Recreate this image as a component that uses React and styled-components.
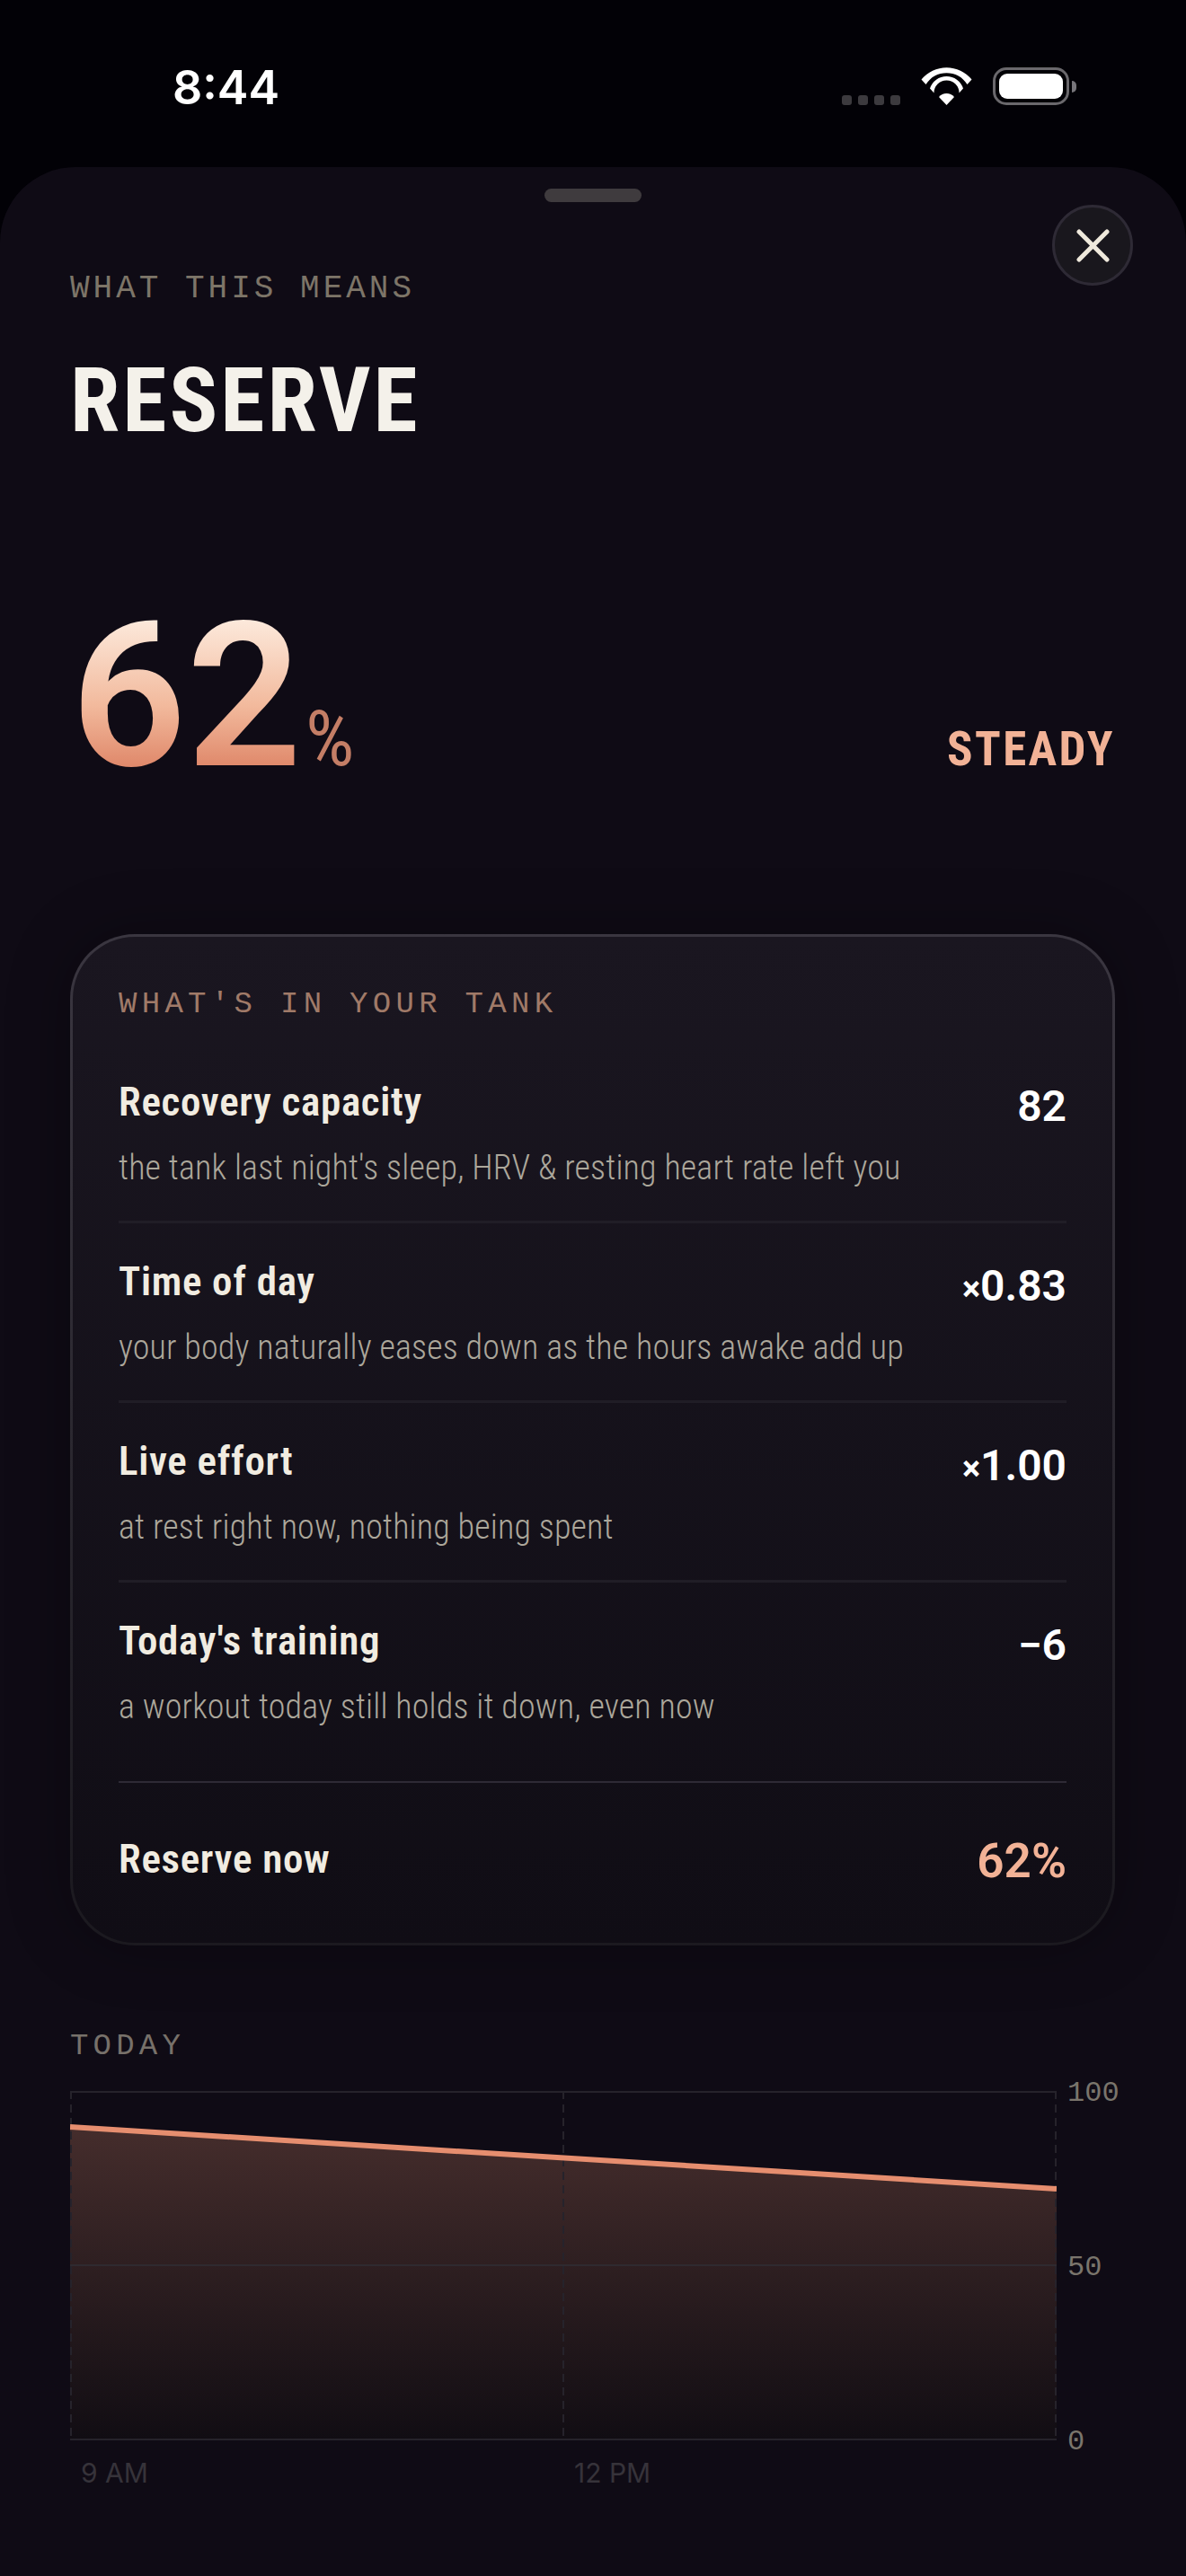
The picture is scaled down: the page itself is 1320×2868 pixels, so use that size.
import { createGlobalStyle, styled } from "styled-components";

const rows = [
    { title: "Recovery capacity", note: "the tank last night's sleep, HRV & resting heart rate left you", value: "82" },
    { title: "Time of day", note: "your body naturally eases down as the hours awake add up", prefix: "×", value: "0.83" },
    { title: "Live effort", note: "at rest right now, nothing being spent", prefix: "×", value: "1.00" },
    { title: "Today's training", note: "a workout today still holds it down, even now", value: "−6" },
];

export default function App() {
    return (
        <Page>
            <GlobalStyle />
            <StatusBar>
                <Clock>8:44</Clock>
                <StatusIcons>
                    <Signal>
                        <i /><i /><i /><i />
                    </Signal>
                    <svg width="57" height="42" viewBox="0 0 57 42" fill="#fff">
                        <path d="M0.5 13.5A36 36 0 0 1 56.5 13.5L51.5 19A27 27 0 0 0 5.5 19Z" />
                        <path d="M10 23.5A19.4 19.4 0 0 1 47 23.5L42.5 28.5A14 14 0 0 0 14.5 28.5Z" />
                        <path d="M20 33A11 11 0 0 1 37 33L28.5 42Z" />
                    </svg>
                    <Battery>
                        <BatteryFill />
                        <BatteryNub />
                    </Battery>
                </StatusIcons>
            </StatusBar>
            <Sheet>
                <Handle />
                <CloseButton>
                    <svg width="37" height="37" viewBox="0 0 37 37" fill="none" stroke="#efe9dc" strokeWidth="5" strokeLinecap="round">
                        <path d="M3 3L34 34M34 3L3 34" />
                    </svg>
                </CloseButton>
                <Eyebrow>WHAT THIS MEANS</Eyebrow>
                <Title>RESERVE</Title>
                <Hero>
                    <HeroValue>
                        <Number>62</Number>
                        <Percent>%</Percent>
                    </HeroValue>
                    <Status>STEADY</Status>
                </Hero>
                <Card>
                    <CardLabel>WHAT'S IN YOUR TANK</CardLabel>
                    {rows.map((row, i) => (
                        <Row key={row.title} $last={i === rows.length - 1}>
                            <RowTop>
                                <RowTitle>{row.title}</RowTitle>
                                <RowValue>
                                    {row.prefix && <Times>{row.prefix}</Times>}
                                    {row.value}
                                </RowValue>
                            </RowTop>
                            <RowNote>{row.note}</RowNote>
                        </Row>
                    ))}
                    <TotalRow>
                        <RowTitle>Reserve now</RowTitle>
                        <TotalValue>62%</TotalValue>
                    </TotalRow>
                </Card>
                <ChartLabel>TODAY</ChartLabel>
                <ChartRow>
                    <svg width="1098" height="390" viewBox="0 0 1098 390">
                        <defs>
                            <linearGradient id="area" x1="0" y1="40" x2="0" y2="388" gradientUnits="userSpaceOnUse">
                                <stop offset="0" stopColor="#452d2c" />
                                <stop offset="1" stopColor="#110d13" />
                            </linearGradient>
                        </defs>
                        <polygon points="0,40 1098,109 1098,388 0,388" fill="url(#area)" />
                        <g stroke="#26232b" strokeWidth="2" fill="none">
                            <path d="M0 1H1098M0 388H1098" />
                            <path d="M0 194H1098" stroke="#2f2a30" />
                            <path d="M1 0V388M549 0V388M1097 0V388" strokeDasharray="9 6" />
                        </g>
                        <line x1="0" y1="40" x2="1098" y2="109" stroke="#e68e6f" strokeWidth="6" />
                    </svg>
                    <YAxis>
                        <span>100</span>
                        <span>50</span>
                        <span>0</span>
                    </YAxis>
                </ChartRow>
                <XAxis>
                    <span>9 AM</span>
                    <span>12 PM</span>
                </XAxis>
            </Sheet>
        </Page>
    );
}

const GlobalStyle = createGlobalStyle`
    html, body {
        margin: 0;
        background: #020106;
    }
    * {
        box-sizing: border-box;
    }
`;

const mono = `"Liberation Mono", monospace`;

const Page = styled.div`
    width: 1320px;
    height: 2868px;
    overflow: hidden;
    background: #020106;
`;

const StatusBar = styled.div`
    height: 186px;
    padding: 73px 130px 0 192px;
    display: flex;
    justify-content: space-between;
    align-items: flex-start;
`;

const Clock = styled.div`
    font-family: Inter, sans-serif;
    font-size: 52px;
    font-weight: 600;
    line-height: 50px;
    color: #fff;
`;

const StatusIcons = styled.div`
    display: flex;
    align-items: flex-end;
    padding-top: 2px;
`;

const Signal = styled.div`
    display: flex;
    gap: 7px;
    margin-right: 23px;
    i {
        width: 11px;
        height: 11px;
        border-radius: 3px;
        background: #3c3a3e;
    }
`;

const Battery = styled.div`
    position: relative;
    width: 85px;
    height: 42px;
    margin-left: 23px;
    padding: 4px;
    border: 3px solid #6a686c;
    border-radius: 15px;
`;

const BatteryFill = styled.div`
    width: 100%;
    height: 100%;
    border-radius: 9px;
    background: #fff;
`;

const BatteryNub = styled.div`
    position: absolute;
    right: -11px;
    top: 12px;
    width: 5px;
    height: 13px;
    border-radius: 0 5px 5px 0;
    background: #77757a;
`;

const Sheet = styled.div`
    position: relative;
    height: 2682px;
    padding: 24px 79px 0 78px;
    border-radius: 84px 84px 0 0;
    background: #0f0b15;
`;

const Handle = styled.div`
    width: 108px;
    height: 15px;
    margin: 0 auto;
    border-radius: 8px;
    background: #3f3b3e;
`;

const CloseButton = styled.div`
    position: absolute;
    top: 42px;
    right: 59px;
    width: 90px;
    height: 90px;
    display: flex;
    align-items: center;
    justify-content: center;
    border: 3px solid #2e2a35;
    border-radius: 50%;
    background: #19171d;
`;

const Eyebrow = styled.div`
    margin-top: 77px;
    font-family: ${mono};
    font-size: 36px;
    line-height: 40px;
    letter-spacing: 4px;
    color: #7d7568;
`;

const Title = styled.h1`
    margin: 49px 0 0;
    font-family: Roboto, sans-serif;
    font-stretch: 75%;
    font-size: 100px;
    font-weight: 700;
    line-height: 110px;
    letter-spacing: 3px;
    color: #f4f1ea;
`;

const Hero = styled.div`
    margin-top: 162px;
    height: 224px;
    display: flex;
    justify-content: space-between;
    align-items: baseline;
`;

const HeroValue = styled.div`
    display: flex;
    align-items: baseline;
    padding-left: 1px;
`;

const Number = styled.span`
    display: inline-block;
    font-family: Roboto, sans-serif;
    font-stretch: 88%;
    font-size: 225px;
    font-weight: 600;
    line-height: 224px;
    background: linear-gradient(180deg, #fce8da 13%, #f2b99c 55%, #e08a6c 84%);
    -webkit-background-clip: text;
    background-clip: text;
    color: transparent;
`;

const Percent = styled.span`
    margin-left: 4px;
    font-family: Roboto, sans-serif;
    font-stretch: 75%;
    font-size: 86px;
    line-height: 78px;
    letter-spacing: 2px;
    color: #c47e66;
`;

const Status = styled.div`
    font-family: Roboto, sans-serif;
    font-stretch: 75%;
    font-size: 53px;
    font-weight: 700;
    line-height: 53px;
    letter-spacing: 2.4px;
    color: #f2b296;
`;

const Card = styled.div`
    margin-top: 153px;
    padding: 57px 51px 0;
    border: 3px solid transparent;
    border-radius: 72px;
    background:
        linear-gradient(180deg, #1a1620, #100d15) padding-box,
        linear-gradient(180deg, #3a3640, #1b191f) border-box;
    box-shadow: 0 0 70px rgba(0, 0, 0, 0.3);
`;

const CardLabel = styled.div`
    margin-bottom: 26px;
    font-family: ${mono};
    font-size: 34px;
    line-height: 36px;
    letter-spacing: 5.3px;
    color: #a07a68;
`;

const Row = styled.div`
    padding: 38px 0 ${(p) => (p.$last ? "58px" : "34px")};
    border-bottom: ${(p) => (p.$last ? "none" : "3px solid #201d26")};
`;

const RowTop = styled.div`
    height: 54px;
    display: flex;
    justify-content: space-between;
    align-items: flex-start;
`;

const RowTitle = styled.div`
    font-family: Roboto, sans-serif;
    font-stretch: 75%;
    font-size: 45px;
    font-weight: 600;
    line-height: 54px;
    letter-spacing: 0.7px;
    color: #f1ece1;
`;

const RowValue = styled.div`
    margin-top: 5px;
    font-family: Roboto, sans-serif;
    font-stretch: 88%;
    font-size: 48px;
    font-weight: 600;
    line-height: 54px;
    color: #fff;
`;

const Times = styled.span`
    font-size: 38px;
    font-weight: 700;
    line-height: 1;
`;

const RowNote = styled.div`
    margin-top: 21px;
    font-family: Roboto, sans-serif;
    font-stretch: 75%;
    font-size: 38px;
    font-weight: 300;
    line-height: 50px;
    letter-spacing: 0.15px;
    color: #aca79b;
`;

const TotalRow = styled.div`
    display: flex;
    justify-content: space-between;
    align-items: flex-start;
    padding: 58px 0 64px;
    border-top: 2px solid #2e2a35;
`;

const TotalValue = styled.div`
    margin-top: 2px;
    font-family: Roboto, sans-serif;
    font-size: 53px;
    font-weight: 600;
    line-height: 54px;
    color: #f2b296;
`;

const ChartLabel = styled.div`
    margin-top: 94px;
    font-family: ${mono};
    font-size: 34px;
    line-height: 36px;
    letter-spacing: 5.2px;
    color: #77716a;
`;

const ChartRow = styled.div`
    margin-top: 32px;
    display: flex;
    gap: 12px;
    svg {
        display: block;
        flex: none;
    }
`;

const YAxis = styled.div`
    height: 418px;
    margin: -12px 0 -16px;
    display: flex;
    flex-direction: column;
    justify-content: space-between;
    font-family: ${mono};
    font-size: 32px;
    line-height: 30px;
    color: #7a756c;
`;

const XAxis = styled.div`
    width: 1098px;
    margin-top: 17px;
    display: grid;
    grid-template-columns: 1fr 1fr;
    font-family: Inter, sans-serif;
    font-size: 30px;
    line-height: 36px;
    color: #36333a;
    span {
        padding-left: 12px;
    }
`;
